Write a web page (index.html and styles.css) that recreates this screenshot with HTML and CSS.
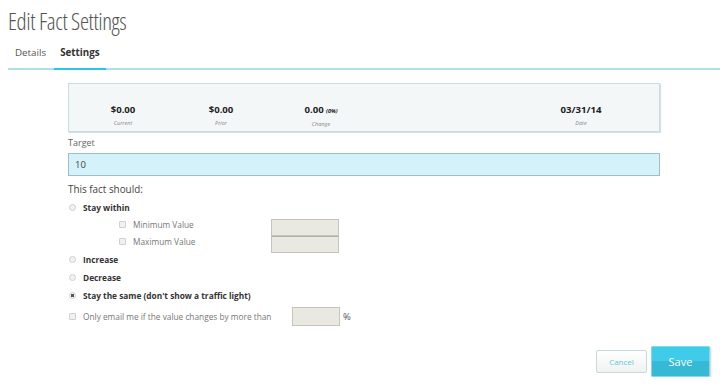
FILE: index.html
```html
<!DOCTYPE html>
<html lang="en">
<head>
    <meta charset="UTF-8">
    <meta name="viewport" content="width=device-width, initial-scale=1.0">
    <title>Edit Fact Settings</title>
    <link rel="stylesheet" href="styles.css">
</head>
<body>

    <h1 class="page-title">Edit Fact Settings</h1>

    <nav class="tabs">
        <a class="tab">Details</a>
        <a class="tab active">Settings</a>
    </nav>

    <form class="fact-form">
        <div class="summary">
            <div class="stat">
                <div class="stat-value">$0.00</div>
                <div class="stat-label">Current</div>
            </div>
            <div class="stat">
                <div class="stat-value">$0.00</div>
                <div class="stat-label">Prior</div>
            </div>
            <div class="stat">
                <div class="stat-value">0.00 <small>(0%)</small></div>
                <div class="stat-label">Change</div>
            </div>
            <div></div>
            <div class="stat">
                <div class="stat-value">03/31/14</div>
                <div class="stat-label">Date</div>
            </div>
        </div>

        <label class="field-label">Target</label>
        <input type="text" class="target-input" value="10">

        <p class="should">This fact should:</p>

        <div class="options">
            <label class="option"><input type="radio" name="rule"> Stay within</label>
            <div class="range">
                <div class="range-checks">
                    <label class="sub-option"><input type="checkbox"> Minimum Value</label>
                    <label class="sub-option"><input type="checkbox"> Maximum Value</label>
                </div>
                <div class="range-inputs">
                    <input type="text" class="small-input">
                    <input type="text" class="small-input">
                </div>
            </div>
            <label class="option"><input type="radio" name="rule"> Increase</label>
            <label class="option"><input type="radio" name="rule"> Decrease</label>
            <label class="option"><input type="radio" name="rule" checked> Stay the same (don't show a traffic light)</label>
            <div class="email-row">
                <label class="sub-option"><input type="checkbox"> Only email me if the value changes by more than</label>
                <input type="text" class="small-input pct-input">
                <span class="pct">%</span>
            </div>
        </div>

        <div class="actions">
            <button type="button" class="btn-cancel">Cancel</button>
            <button type="button" class="btn-save">Save</button>
        </div>
    </form>

</body>
</html>
```

FILE: styles.css
```css
body {
    font-family: "Open Sans", "DejaVu Sans", sans-serif;
    margin: 0;
    padding: 0 4px 0 8px;
    background: #fff;
    color: #333;
}
.page-title {
    margin: 0;
    padding-top: 6px;
    font-size: 23px;
    font-weight: 300;
    font-stretch: 75%;
    letter-spacing: -0.4px;
    color: #555;
    line-height: 30px;
}
.tabs {
    display: flex;
    margin-top: 10px;
    border-bottom: 2px solid #aee0e8;
}
.tab {
    font-size: 9.8px;
    color: #555;
    padding: 0 8px 8px 7px;
    line-height: 14px;
}
.tab.active {
    font-weight: bold;
    color: #333;
    padding: 0 6px 8px 6px;
    margin-bottom: -2px;
    border-bottom: 2px solid #2ec4ea;
}
.fact-form {
    margin: 13px 0 0 60px;
    width: 592px;
}
.summary {
    display: grid;
    grid-template-columns: 98px 98px 102px 1fr 80px;
    padding: 19px 38px 0 5px;
    height: 28px;
    background: #f3f7f8;
    border: 1px solid #c9dce0;
    box-shadow: 1px 1px 1px #d6e2e5;
}
.stat {
    text-align: center;
}
.stat-value {
    font-size: 9.6px;
    font-weight: bold;
    line-height: 14px;
    color: #222;
}
.stat-value small {
    font-size: 5.5px;
    font-style: italic;
}
.stat-label {
    font-size: 5.5px;
    font-style: italic;
    color: #888;
    line-height: 8px;
    margin-top: 2px;
}
.field-label {
    display: block;
    margin-top: 4px;
    font-size: 9px;
    color: #666;
    line-height: 14px;
}
.target-input {
    display: block;
    box-sizing: border-box;
    width: 592px;
    height: 23px;
    margin-top: 3px;
    padding: 0 6px;
    background: #d3f2f9;
    border: 1px solid #9dbfc7;
    font-family: inherit;
    font-size: 9.5px;
    color: #444;
    outline: none;
}
.should {
    margin: 6px 0 0;
    font-size: 9.9px;
    color: #444;
    line-height: 14px;
}
.options {
    display: flex;
    flex-direction: column;
    margin-top: 2px;
}
.option {
    display: flex;
    align-items: center;
    height: 18px;
    font-size: 8.3px;
    font-weight: bold;
    color: #333;
}
.sub-option {
    display: flex;
    align-items: center;
    font-size: 8.3px;
    color: #777;
}
input[type="radio"],
input[type="checkbox"] {
    appearance: none;
    -webkit-appearance: none;
    margin: 0 7px 0 1px;
    width: 7px;
    height: 7px;
    background: #f1f1f1;
    border: 1px solid #d0d0d0;
    flex: none;
}
input[type="radio"] {
    border-radius: 50%;
}
input[type="checkbox"] {
    border-radius: 1px;
}
input[type="radio"]:checked {
    background: radial-gradient(circle, #555 0 1.5px, #f1f1f1 2px);
}
.range {
    display: flex;
    margin: 3px 0 -3px 50px;
}
.range-checks {
    display: flex;
    flex-direction: column;
    width: 153px;
    margin-top: -3px;
}
.range-checks .sub-option {
    height: 17px;
}
.range-inputs {
    display: flex;
    flex-direction: column;
}
.small-input {
    box-sizing: border-box;
    width: 68px;
    height: 17px;
    margin: 0;
    background: #e9e9e1;
    border: 1px solid #c5c5bd;
    outline: none;
}
.range-inputs .small-input + .small-input {
    border-top: 1px solid #b0b0a8;
}
.email-row {
    display: flex;
    align-items: center;
    margin-top: 3px;
}
.email-row .sub-option {
    width: 224px;
}
.pct-input {
    width: 48px;
    height: 19px;
}
.pct {
    margin-left: 3px;
    font-size: 9.5px;
    color: #555;
}
.actions {
    display: flex;
    justify-content: flex-end;
    align-items: center;
    gap: 4px;
    margin: 20px -50px 0 0;
}
.btn-cancel {
    width: 51px;
    height: 23px;
    padding: 0;
    background: linear-gradient(#fff, #f0f2f2);
    border: 1px solid #c8d8dc;
    border-radius: 2px;
    font-family: inherit;
    font-size: 8px;
    color: #5cc7e2;
    cursor: pointer;
}
.btn-save {
    width: 59px;
    height: 31px;
    padding: 0;
    background: linear-gradient(#3fcbea 0 50%, #35b9d5 50% 100%);
    border: 1px solid #86d8ea;
    border-radius: 1px;
    box-shadow: 1px 1px 2px rgba(0, 0, 0, 0.2);
    font-family: inherit;
    font-size: 11px;
    color: #fff;
    cursor: pointer;
}
```
